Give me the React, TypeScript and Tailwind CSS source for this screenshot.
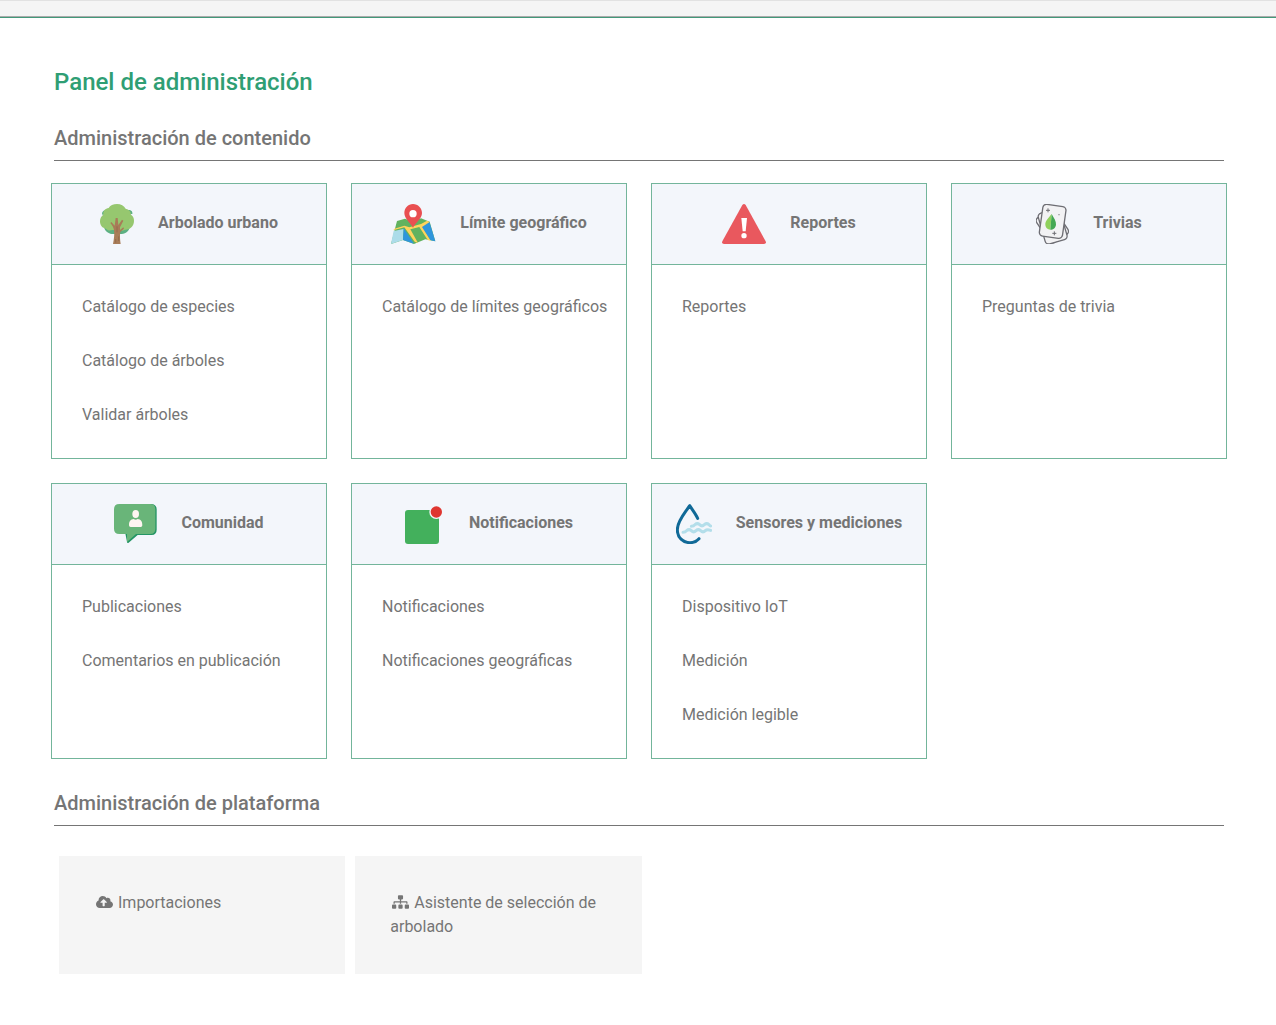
import type { ReactNode } from 'react'
import { FaCloudUploadAlt, FaSitemap } from 'react-icons/fa'

type Category = {
  title: string
  icon: ReactNode
  links: string[]
}

const TreeIcon = () => (
  <svg className="h-10 w-[34px]" viewBox="30 27 102 120" aria-hidden="true">
    <path
      d="M50 45c-8-1-16 6-13 14l90-2c2-8-5-13-12-12zM42 95c2 16 18 23 30 22h18c14 0 26-6 30-22z"
      fill="#5cb083"
    />
    <path
      d="M56 39C60 31 70 27 81 27c12 0 21 5 26 14 10 2 15 7 16 18 7 5 9 10 9 19 0 16-13 27-27 26-6 4-13 4-18 1h-20c-8 3-15 1-19-4-11-1-18-10-18-22 0-9 4-16 10-20-1-11 6-19 16-20z"
      fill="#96c76f"
    />
    <path
      d="M69 147c3-15 5-30 3-41-1-9-5-15-11-22l3-3 10 11 3-23h6l2 21 11-16 4 3-10 20v8l10-8 2 4-11 10c-2 11-1 24 1 36z"
      fill="#a87c58"
    />
    <path d="M81 94v18M86 124v14M77 132v11" stroke="#8b6346" strokeWidth="2" />
  </svg>
)

const MapIcon = () => (
  <svg className="h-10 w-[45px]" viewBox="18 27 135 120" aria-hidden="true">
    <path d="M36 78l24-7 24 9 24-10 26 10 17 59-30-6-34 14-33-12-36 12z" fill="#61b25f" />
    <path d="M26 108l30-6-2 33-36 12z" fill="#acdce9" />
    <path d="M56 99l31 47-33-11z" fill="#2f95dc" />
    <path d="M107 93l26-13 18 59-14-3z" fill="#2f95dc" />
    <path
      d="M28 101l30-9 15 5 35-10 18-10 8 4-23 15 26 41-9-2-25-39-27 7 23 41-10-4-31-43-33 9z"
      fill="#ffd35c"
    />
    <path
      d="M84 98c-7-14-26-27-26-44 0-15 11-27 26-27s27 12 27 27c0 17-19 29-27 44z"
      fill="#e94f51"
    />
    <circle cx="84" cy="56" r="11" fill="#fff" />
  </svg>
)

const WarningIcon = () => (
  <svg className="h-10 w-11" viewBox="21 27 132 120" aria-hidden="true">
    <path
      d="M82 30q5-6 10 0l60 109q3 8-5 8H27q-8 0-5-8z"
      fill="#e9585e"
    />
    <path d="M79 69h17l-4 40h-9z" fill="#fff" />
    <circle cx="87" cy="122" r="8" fill="#fff" />
  </svg>
)

const CardsIcon = () => (
  <svg className="h-10 w-[33px]" viewBox="33 27 99 120" aria-hidden="true">
    <g fill="#f2f2f4" stroke="#6e6e74" strokeWidth="4">
      <rect x="49" y="48" width="66" height="90" rx="11" transform="rotate(-34 82 93)" />
      <rect x="49" y="46" width="68" height="96" rx="11" transform="rotate(-16 83 94)" />
      <rect x="48" y="31" width="70" height="96" rx="11" transform="rotate(8 83 79)" />
    </g>
    <path d="M80 57c-9 11-19 20-19 31 0 10 7 16 15 16z" fill="#8fd15c" />
    <path d="M80 57c7 12 14 22 13 32-1 9-8 15-17 15z" fill="#45a854" />
    <path d="M69 40v12M63 46h12M88 109v12M82 115h12" stroke="#6e6e74" strokeWidth="3" />
    <circle cx="102" cy="59" r="2" fill="#77777d" />
  </svg>
)

const CommunityIcon = () => (
  <svg className="h-10 w-[43px]" viewBox="27 27 129 120" aria-hidden="true">
    <path
      d="M44 27h96q15 2 15 16v61q0 15-15 16H98l-28 24q-4 1-4-3z"
      fill="#249565"
    />
    <path
      d="M43 27h92q16 0 16 16v58q0 16-16 16H93l-27 24v-24H43q-16 0-16-16V43q0-16 16-16z"
      fill="#69b579"
    />
    <ellipse cx="92" cy="57" rx="10" ry="12" fill="#fff5f1" />
    <path
      d="M72 91c0-13 5-18 14-19q6 5 12 0c9 1 14 6 14 19q0 5-5 5H77q-5 0-5-5z"
      fill="#fff5f1"
    />
  </svg>
)

const NotificationIcon = () => (
  <svg className="h-10 w-10" viewBox="30 27 120 120" aria-hidden="true">
    <rect x="30" y="45" width="102" height="102" rx="9" fill="#43b05c" />
    <circle cx="124" cy="51" r="21" fill="#f3f6fb" />
    <circle cx="124" cy="51" r="17" fill="#df3630" />
  </svg>
)

const WaterIcon = () => (
  <svg className="h-10 w-9" viewBox="33 27 108 120" aria-hidden="true">
    <g fill="none" strokeLinecap="round" strokeLinejoin="round">
      <path
        d="M98 70C92 57 83 46 74 32 60 54 37 78 37 104c0 24 17 39 38 39 11 0 20-4 27-12"
        stroke="#106997"
        strokeWidth="9"
      />
      <path
        d="M79 94q7 0 11-5 7-6 14 0 7 7 14 0 7-6 14 0 3 4 5 4M54 112q7 0 11-5 7-6 14 0 7 7 14 0 7-6 14 0 7 7 14 0 5-5 16-1"
        stroke="#b3deea"
        strokeWidth="9"
      />
    </g>
  </svg>
)

const categories: Category[] = [
  {
    title: 'Arbolado urbano',
    icon: <TreeIcon />,
    links: ['Catálogo de especies', 'Catálogo de árboles', 'Validar árboles'],
  },
  {
    title: 'Límite geográfico',
    icon: <MapIcon />,
    links: ['Catálogo de límites geográficos'],
  },
  { title: 'Reportes', icon: <WarningIcon />, links: ['Reportes'] },
  { title: 'Trivias', icon: <CardsIcon />, links: ['Preguntas de trivia'] },
  {
    title: 'Comunidad',
    icon: <CommunityIcon />,
    links: ['Publicaciones', 'Comentarios en publicación'],
  },
  {
    title: 'Notificaciones',
    icon: <NotificationIcon />,
    links: ['Notificaciones', 'Notificaciones geográficas'],
  },
  {
    title: 'Sensores y mediciones',
    icon: <WaterIcon />,
    links: ['Dispositivo IoT', 'Medición', 'Medición legible'],
  },
]

const tools = [
  { label: 'Importaciones', Icon: FaCloudUploadAlt },
  { label: 'Asistente de selección de arbolado', Icon: FaSitemap },
]

const SectionTitle = ({ children }: { children: ReactNode }) => (
  <h2 className="border-b border-[#757575] pb-2.5 text-xl leading-6 font-medium">
    {children}
  </h2>
)

const CategoryCard = ({ title, icon, links }: Category) => (
  <article className="min-h-[276px] border border-[#73b59b]">
    <header className="flex h-[81px] items-center justify-center gap-6 border-b border-[#73b59b] bg-[#f3f6fb]">
      {icon}
      <h3 className="pb-0.5 leading-6 font-bold">{title}</h3>
    </header>
    <ul className="pt-[15px] pl-[30px]">
      {links.map((link) => (
        <li key={link} className="py-[15px] leading-6">
          <a href="#" className="whitespace-nowrap hover:underline">
            {link}
          </a>
        </li>
      ))}
    </ul>
  </article>
)

const App = () => (
  <div className="bg-white font-['Roboto',sans-serif] text-base text-[#757575]">
    <div className="border-b border-[#43997a]">
      <div className="h-[17px] border-t border-b border-t-[#e2e2e2] border-b-[#ababab] bg-[#f5f5f5]" />
    </div>

    <main className="pt-12 pr-[52px] pb-[51px] pl-[54px]">
      <h1 className="text-2xl font-medium text-[#2f9e74]">
        Panel de administración
      </h1>

      <section className="pt-7">
        <SectionTitle>Administración de contenido</SectionTitle>
        <div className="-mx-[3px] mt-[22px] grid grid-cols-4 gap-6">
          {categories.map((category) => (
            <CategoryCard key={category.title} {...category} />
          ))}
        </div>
      </section>

      <section className="pt-8">
        <SectionTitle>Administración de plataforma</SectionTitle>
        <div className="mt-[30px] -mr-[10px] ml-[5px] grid grid-cols-4 gap-2.5">
          {tools.map(({ label, Icon }) => (
            <a
              key={label}
              href="#"
              className="block bg-[#f5f5f5] p-[35px] leading-6 hover:underline"
            >
              <span className="mr-1 inline-flex w-5 justify-center align-[-1px]">
                <Icon className="h-3.5 w-[17px]" aria-hidden="true" />
              </span>
              {label}
            </a>
          ))}
        </div>
      </section>
    </main>
  </div>
)

export default App
